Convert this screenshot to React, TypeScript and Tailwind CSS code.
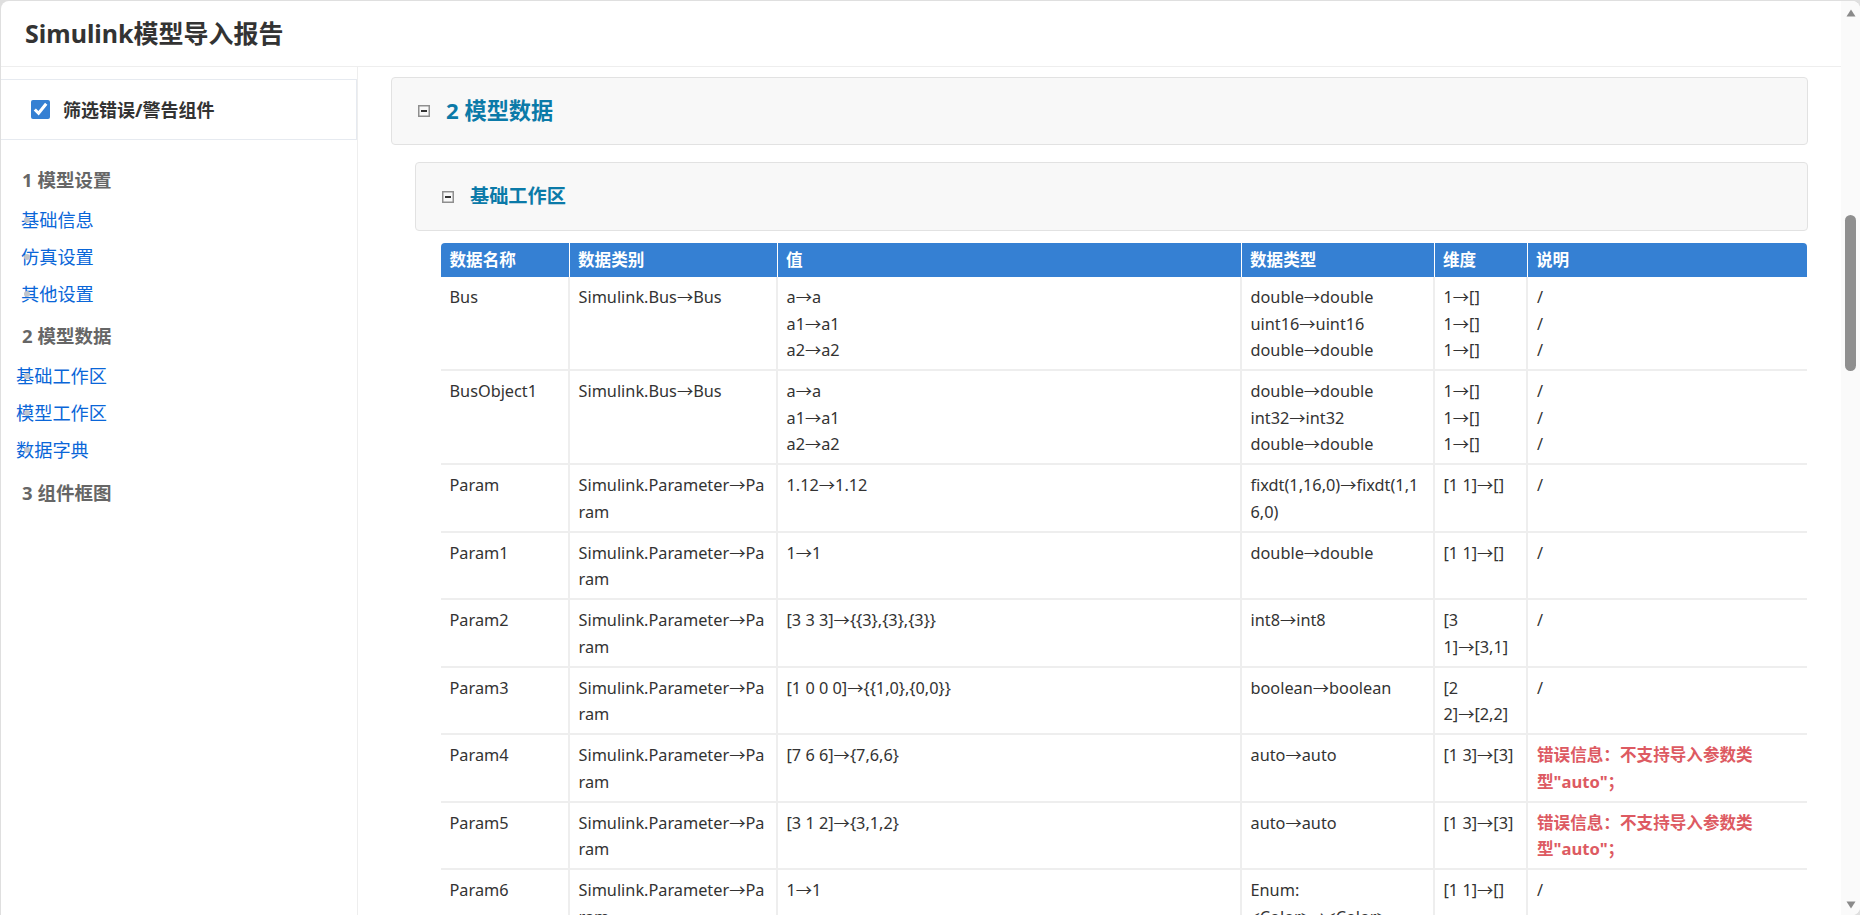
const columns = ['w-[128px]', 'w-[208px]', 'w-[464px]', 'w-[193px]', 'w-[93px]', 'w-[280px]'];

const headers = ['数据名称', '数据类别', '值', '数据类型', '维度', '说明'];

const errorText = '错误信息：不支持导入参数类型"auto"；';

interface Row {
  name: string;
  kind: string;
  values: string[];
  types: string[];
  dims: string[];
  notes: string[];
  error?: boolean;
}

const rows: Row[] = [
  {
    name: 'Bus',
    kind: 'Simulink.Bus→Bus',
    values: ['a→a', 'a1→a1', 'a2→a2'],
    types: ['double→double', 'uint16→uint16', 'double→double'],
    dims: ['1→[]', '1→[]', '1→[]'],
    notes: ['/', '/', '/'],
  },
  {
    name: 'BusObject1',
    kind: 'Simulink.Bus→Bus',
    values: ['a→a', 'a1→a1', 'a2→a2'],
    types: ['double→double', 'int32→int32', 'double→double'],
    dims: ['1→[]', '1→[]', '1→[]'],
    notes: ['/', '/', '/'],
  },
  {
    name: 'Param',
    kind: 'Simulink.Parameter→Param',
    values: ['1.12→1.12'],
    types: ['fixdt(1,16,0)→fixdt(1,16,0)'],
    dims: ['[1 1]→[]'],
    notes: ['/'],
  },
  {
    name: 'Param1',
    kind: 'Simulink.Parameter→Param',
    values: ['1→1'],
    types: ['double→double'],
    dims: ['[1 1]→[]'],
    notes: ['/'],
  },
  {
    name: 'Param2',
    kind: 'Simulink.Parameter→Param',
    values: ['[3 3 3]→{{3},{3},{3}}'],
    types: ['int8→int8'],
    dims: ['[3 1]→[3,1]'],
    notes: ['/'],
  },
  {
    name: 'Param3',
    kind: 'Simulink.Parameter→Param',
    values: ['[1 0 0 0]→{{1,0},{0,0}}'],
    types: ['boolean→boolean'],
    dims: ['[2 2]→[2,2]'],
    notes: ['/'],
  },
  {
    name: 'Param4',
    kind: 'Simulink.Parameter→Param',
    values: ['[7 6 6]→{7,6,6}'],
    types: ['auto→auto'],
    dims: ['[1 3]→[3]'],
    notes: [errorText],
    error: true,
  },
  {
    name: 'Param5',
    kind: 'Simulink.Parameter→Param',
    values: ['[3 1 2]→{3,1,2}'],
    types: ['auto→auto'],
    dims: ['[1 3]→[3]'],
    notes: [errorText],
    error: true,
  },
  {
    name: 'Param6',
    kind: 'Simulink.Parameter→Param',
    values: ['1→1'],
    types: ['Enum:', '<Color>→<Color>'],
    dims: ['[1 1]→[]'],
    notes: ['/'],
  },
];

function MinusBox() {
  return (
    <svg width="12" height="12" viewBox="0 0 12 12" className="shrink-0">
      <rect x="0.75" y="0.75" width="10.5" height="10.5" fill="#f8f8f8" stroke="#8f8f8f" strokeWidth="1.5" />
      <rect x="3" y="5" width="6" height="2" fill="#333333" />
    </svg>
  );
}

function NavTitle({ children }: { children: string }) {
  return <div className="pl-[21px] text-[18.5px] leading-[26px] font-bold text-[#666666]">{children}</div>;
}

function NavLink({ children, indent }: { children: string; indent: string }) {
  return (
    <div className={`relative text-[18.2px] leading-[26px] text-[#0a66d8] ${indent}`}>
      <span className="absolute left-[23px] top-[10px] h-[6px] w-[6px] rounded-full bg-[#c0c4cc]" />
      {children}
    </div>
  );
}

function Sidebar() {
  return (
    <aside className="flex w-[357px] shrink-0 flex-col border-r border-[#eeeeee]">
      <div className="mt-[12px] flex h-[61px] items-center gap-[13px] border-y border-r border-[#e6eaf0] pl-[30px]">
        <input type="checkbox" checked readOnly className="h-[19px] w-[19px] accent-[#3580d3]" />
        <span className="pt-[2px] text-[18px] font-bold text-[#333333]">筛选错误/警告组件</span>
      </div>
      <div className="flex flex-col pt-[27px]">
        <NavTitle>1 模型设置</NavTitle>
        <div className="mt-[14px] flex flex-col gap-[11px]">
          <NavLink indent="pl-[20px]">基础信息</NavLink>
          <NavLink indent="pl-[20px]">仿真设置</NavLink>
          <NavLink indent="pl-[20px]">其他设置</NavLink>
        </div>
        <div className="mt-[16px]">
          <NavTitle>2 模型数据</NavTitle>
        </div>
        <div className="mt-[14px] flex flex-col gap-[11px]">
          <NavLink indent="pl-[15px]">基础工作区</NavLink>
          <NavLink indent="pl-[15px]">模型工作区</NavLink>
          <NavLink indent="pl-[15px]">数据字典</NavLink>
        </div>
        <div className="mt-[17px]">
          <NavTitle>3 组件框图</NavTitle>
        </div>
      </div>
    </aside>
  );
}

function Lines({ items }: { items: string[] }) {
  return (
    <>
      {items.map((item, i) => (
        <div key={i}>{item}</div>
      ))}
    </>
  );
}

function DataTable() {
  return (
    <table className="mt-[12px] ml-[50px] w-[1366px] table-fixed border-collapse text-[16.3px] leading-[26.5px] text-[#333333]">
      <colgroup>
        {columns.map((c, i) => (
          <col key={i} className={c} />
        ))}
      </colgroup>
      <thead>
        <tr className="h-[34px] bg-[#3580d3] text-left text-white">
          {headers.map((h, i) => (
            <th
              key={h}
              className={`border-r border-white px-[8.5px] py-0 text-[16.6px] font-bold last:border-r-0 ${i === 0 ? 'rounded-tl-[4px]' : ''} ${i === 5 ? 'rounded-tr-[4px]' : ''}`}
            >
              {h}
            </th>
          ))}
        </tr>
      </thead>
      <tbody>
        {rows.map((row) => (
          <tr key={row.name} className="border-b-2 border-[#eeeeee] align-top">
            <td className="border-r-2 border-[#eeeeee] px-[8.5px] pt-[7px] pb-[5.5px] break-words">{row.name}</td>
            <td className="border-r-2 border-[#eeeeee] px-[8.5px] pt-[7px] pb-[5.5px] break-words">{row.kind}</td>
            <td className="border-r-2 border-[#eeeeee] px-[8.5px] pt-[7px] pb-[5.5px] break-words">
              <Lines items={row.values} />
            </td>
            <td className="border-r-2 border-[#eeeeee] px-[8.5px] pt-[7px] pb-[5.5px] break-words">
              <Lines items={row.types} />
            </td>
            <td className="border-r-2 border-[#eeeeee] px-[8.5px] pt-[7px] pb-[5.5px] break-words">
              <Lines items={row.dims} />
            </td>
            <td className="pt-[7px] pr-[44px] pb-[5.5px] pl-[9px] break-words">
              {row.error ? (
                <span className="text-[16.6px] font-bold text-[#dd5a62]">{row.notes[0]}</span>
              ) : (
                <Lines items={row.notes} />
              )}
            </td>
          </tr>
        ))}
      </tbody>
    </table>
  );
}

function Scrollbar() {
  return (
    <div className="flex w-[19px] shrink-0 flex-col items-center bg-[#fafafa] pt-[8px] pb-[6px]">
      <svg width="10" height="8" viewBox="0 0 10 8">
        <path d="M5 0.5 L9.5 7.5 L0.5 7.5 Z" fill="#8a8a8a" />
      </svg>
      <div className="mt-[198px] h-[156px] w-[11px] rounded-full bg-[#8f8f8f]" />
      <div className="flex-1" />
      <svg width="10" height="8" viewBox="0 0 10 8">
        <path d="M0.5 0.5 L9.5 0.5 L5 7.5 Z" fill="#8a8a8a" />
      </svg>
    </div>
  );
}

export default function App() {
  return (
    <div className="h-[915px] w-[1860px] overflow-hidden bg-[#dfdfdf] pt-px pl-px font-['Noto_Sans','Noto_Sans_CJK_SC',sans-serif]">
      <div className="flex h-full overflow-hidden rounded-tl-[8px] rounded-tr-[8px] rounded-br-[8px] bg-white">
        <div className="flex min-w-0 flex-1 flex-col">
          <header className="flex h-[66px] shrink-0 items-center border-b border-[#eeeeee] pl-[24px] text-[25px] font-bold text-[#333333]">
            Simulink模型导入报告
          </header>
          <div className="flex min-h-0 flex-1">
            <Sidebar />
            <main className="min-w-0 flex-1 overflow-hidden pt-[10px] pl-[33px]">
              <div className="flex h-[68px] w-[1417px] items-center gap-[16px] rounded-[4px] border border-[#e2e2e2] bg-[#f8f8f8] pl-[26px]">
                <MinusBox />
                <span className="text-[22.2px] font-bold text-[#0b7aa8]">2 模型数据</span>
              </div>
              <div className="mt-[17px] ml-[24px] flex h-[69px] w-[1393px] items-center gap-[16px] rounded-[4px] border border-[#e2e2e2] bg-[#f8f8f8] pl-[26px]">
                <MinusBox />
                <span className="text-[19.2px] font-bold text-[#0b7aa8]">基础工作区</span>
              </div>
              <DataTable />
            </main>
          </div>
        </div>
        <Scrollbar />
      </div>
    </div>
  );
}
